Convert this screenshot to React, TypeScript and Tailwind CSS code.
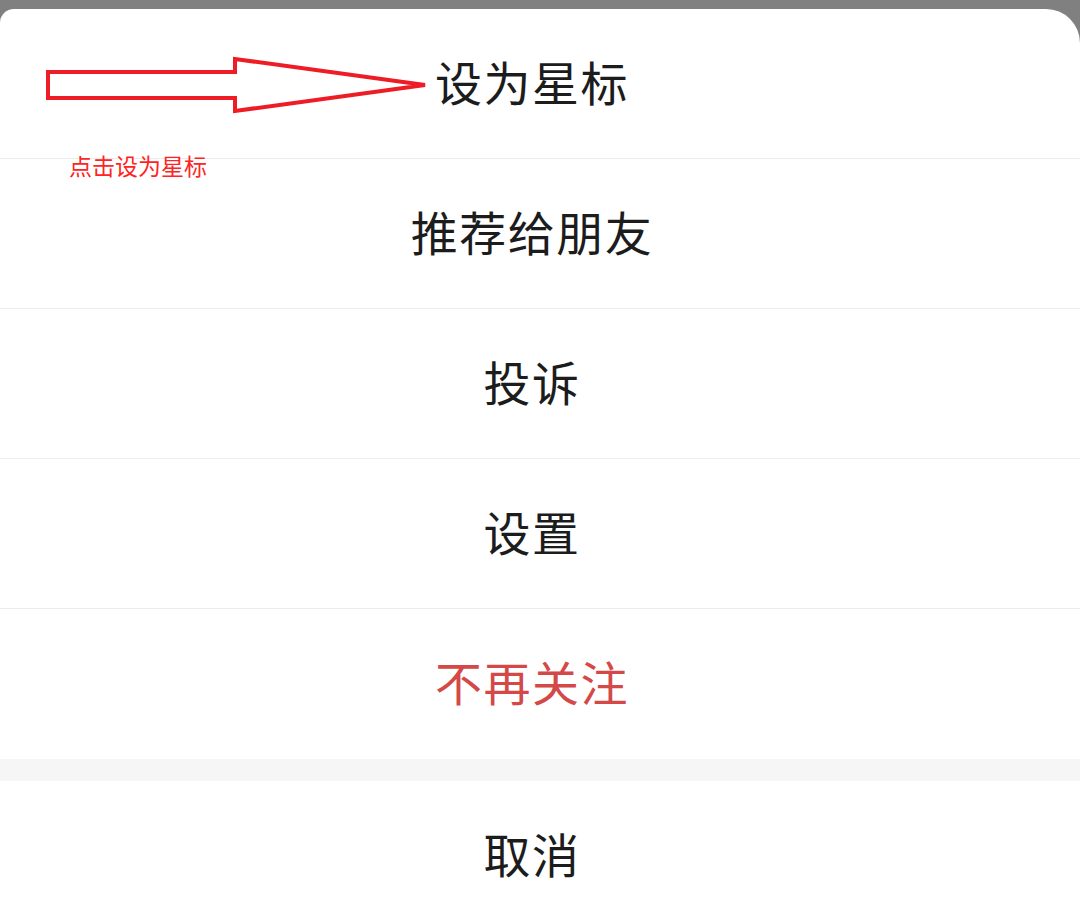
import React from "react";

const font = { fontFamily: '"Noto Sans CJK SC", "Noto Sans", sans-serif' };

function Row({ text, red, border }: { text: string; red?: boolean; border?: boolean }) {
  return (
    <div
      className={`h-[150px] flex items-center justify-center pr-[16px] pb-[5px] text-[47px] tracking-[1.5px] ${
        red ? "text-[#d44848]" : "text-[#1c1c1c]"
      } ${border ? "border-b-[1.5px] border-[#ececec]" : ""}`}
    >
      {text}
    </div>
  );
}

export default function App() {
  return (
    <div className="w-[1080px] h-[907px] overflow-hidden bg-[#808080]" style={font}>
      <div className="mt-[9px] relative bg-white rounded-tl-[14px] rounded-tr-[34px] overflow-hidden">
        <Row text="设为星标" border />
        <Row text="推荐给朋友" border />
        <Row text="投诉" border />
        <Row text="设置" border />
        <Row text="不再关注" red />
        <div className="h-[22px] bg-[#f6f6f6]" />
        <Row text="取消" />

        <svg className="absolute left-0 top-0" width="440" height="130" viewBox="0 0 440 130">
          <polygon
            points="48,63 235,63 235,50 425,76 235,102 235,89 48,89"
            fill="none"
            stroke="#ee1c25"
            strokeWidth="4"
            strokeLinejoin="miter"
          />
        </svg>
        <div className="absolute left-[69px] top-[142px] text-[23px] leading-[28px] text-[#ff2424]">
          点击设为星标
        </div>
      </div>
    </div>
  );
}
